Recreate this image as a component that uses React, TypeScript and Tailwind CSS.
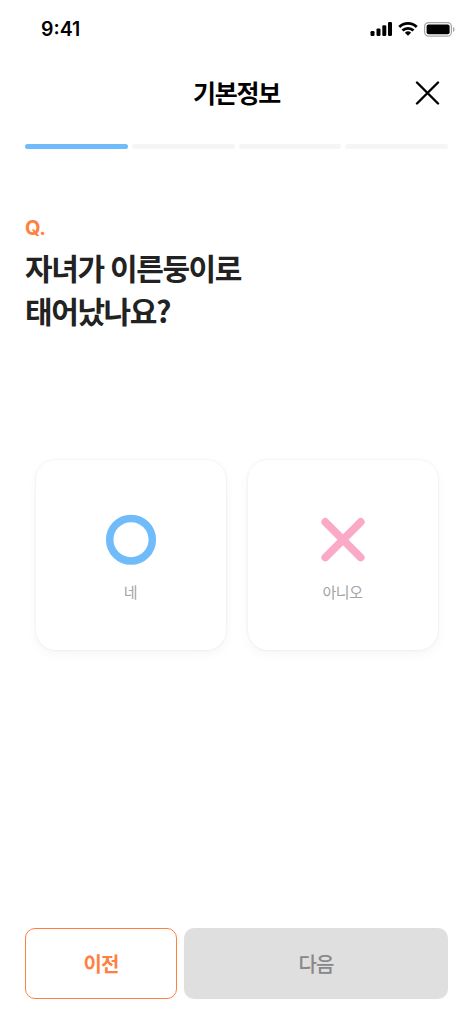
import type { ReactNode } from "react";

const steps = [1, 2, 3, 4];
const currentStep = 1;

function StatusBar() {
  return (
    <div className="flex h-[58px] items-center justify-between pr-[18px] pl-[41px]">
      <span className="pt-[2px] font-['Inter',sans-serif] text-[19.5px] leading-none font-semibold">
        9:41
      </span>
      <div className="flex items-center">
        <svg width="22" height="14" viewBox="0 0 22 14" fill="#000">
          <rect x="0.5" y="9" width="4" height="5" rx="1.2" />
          <rect x="6.5" y="6.4" width="4" height="7.6" rx="1.2" />
          <rect x="12.3" y="3.2" width="4" height="10.8" rx="1.2" />
          <rect x="18" y="0" width="4" height="14" rx="1.2" />
        </svg>
        <svg
          className="ml-[6px]"
          width="20"
          height="14"
          viewBox="0 0 20 14"
          fill="none"
          stroke="#000"
          strokeWidth="2.8"
        >
          <path d="M1.3 5a12.4 12.4 0 0 1 17.4 0" />
          <path d="M4.5 8.6a7.8 7.8 0 0 1 11 0" />
          <path
            d="M10 13.7 6.9 10.7a4.5 4.5 0 0 1 6.2 0Z"
            fill="#000"
            stroke="none"
          />
        </svg>
        <svg
          className="ml-[6px]"
          width="31"
          height="15"
          viewBox="0 0 31 15"
          fill="none"
        >
          <rect
            x="0.6"
            y="0.6"
            width="26.8"
            height="13.6"
            rx="4"
            stroke="#a6a6a6"
            strokeWidth="1.2"
          />
          <rect x="2.6" y="2.5" width="23" height="9.8" rx="2" fill="#000" />
          <path d="M29 5v5c1-.4 1.6-1.4 1.6-2.5S30 5.4 29 5Z" fill="#a6a6a6" />
        </svg>
      </div>
    </div>
  );
}

function ChoiceCard({ label, children }: { label: string; children: ReactNode }) {
  return (
    <button
      type="button"
      className="flex h-[190px] flex-1 flex-col items-center rounded-[20px] bg-white pt-[54px] shadow-[0_0_2px_1px_rgba(0,0,0,0.04),0_4px_12px_rgba(0,0,0,0.04)]"
    >
      {children}
      <span className="mt-[15px] text-[15px] leading-[22px] font-normal tracking-[-0.5px] text-[#a3a3a3]">
        {label}
      </span>
    </button>
  );
}

export default function App() {
  return (
    <main className="flex h-[1024px] w-[473px] flex-col bg-white font-['Noto_Sans_CJK_KR',sans-serif] text-black">
      <StatusBar />

      <header className="grid h-[70px] grid-cols-[1fr_auto_1fr] items-center px-[33px]">
        <h1 className="col-start-2 -mt-[2px] text-[25px] leading-none font-bold tracking-[-1.3px]">
          기본정보
        </h1>
        <button type="button" aria-label="닫기" className="justify-self-end">
          <svg
            width="25"
            height="24"
            viewBox="0 0 25 24"
            stroke="#000"
            strokeWidth="2.4"
            strokeLinecap="round"
          >
            <path d="m2 1.5 21 21M23 1.5l-21 21" />
          </svg>
        </button>
      </header>

      <div className="mx-[25px] mt-[16px] flex gap-[4px]">
        {steps.map((step) => (
          <div
            key={step}
            className={
              step <= currentStep
                ? "h-[5px] flex-1 rounded-full bg-[#70bbf9]"
                : "h-[5px] flex-1 rounded-full bg-[#f5f5f5]"
            }
          />
        ))}
      </div>

      <section className="mt-[64px] px-[25px]">
        <p className="font-['Inter',sans-serif] text-[20px] leading-[30px] font-bold tracking-[-0.5px] text-[#ff8041]">
          Q.
        </p>
        <h2 className="mt-[3px] text-[30px] leading-[43px] font-bold tracking-[-1.4px] text-[#222] [word-spacing:1px]">
          자녀가 이른둥이로
          <br />
          태어났나요?
        </h2>
      </section>

      <div className="mt-[128px] flex gap-[22px] px-[35.5px]">
        <ChoiceCard label="네">
          <svg width="52" height="52" viewBox="0 0 52 52" fill="none">
            <circle cx="26" cy="25.7" r="21.3" stroke="#70bbf9" strokeWidth="7.5" />
          </svg>
        </ChoiceCard>
        <ChoiceCard label="아니오">
          <svg
            width="52"
            height="52"
            viewBox="0 0 52 52"
            stroke="#faa9c7"
            strokeWidth="7.8"
            strokeLinecap="round"
          >
            <path d="m8.3 8 35.4 35.4M43.7 8 8.300 43.400" />
          </svg>
        </ChoiceCard>
      </div>

      <footer className="mt-auto flex gap-[7px] px-[25px] pb-[25px] text-[20px] font-bold tracking-[-1px]">
        <button
          type="button"
          className="h-[71px] w-[152px] rounded-[10px] border-[1.5px] border-[#ff8041] text-[#ff8041]"
        >
          이전
        </button>
        <button
          type="button"
          disabled
          className="h-[71px] flex-1 rounded-[10px] bg-[#dfdfdf] font-medium text-[#888]"
        >
          다음
        </button>
      </footer>
    </main>
  );
}
